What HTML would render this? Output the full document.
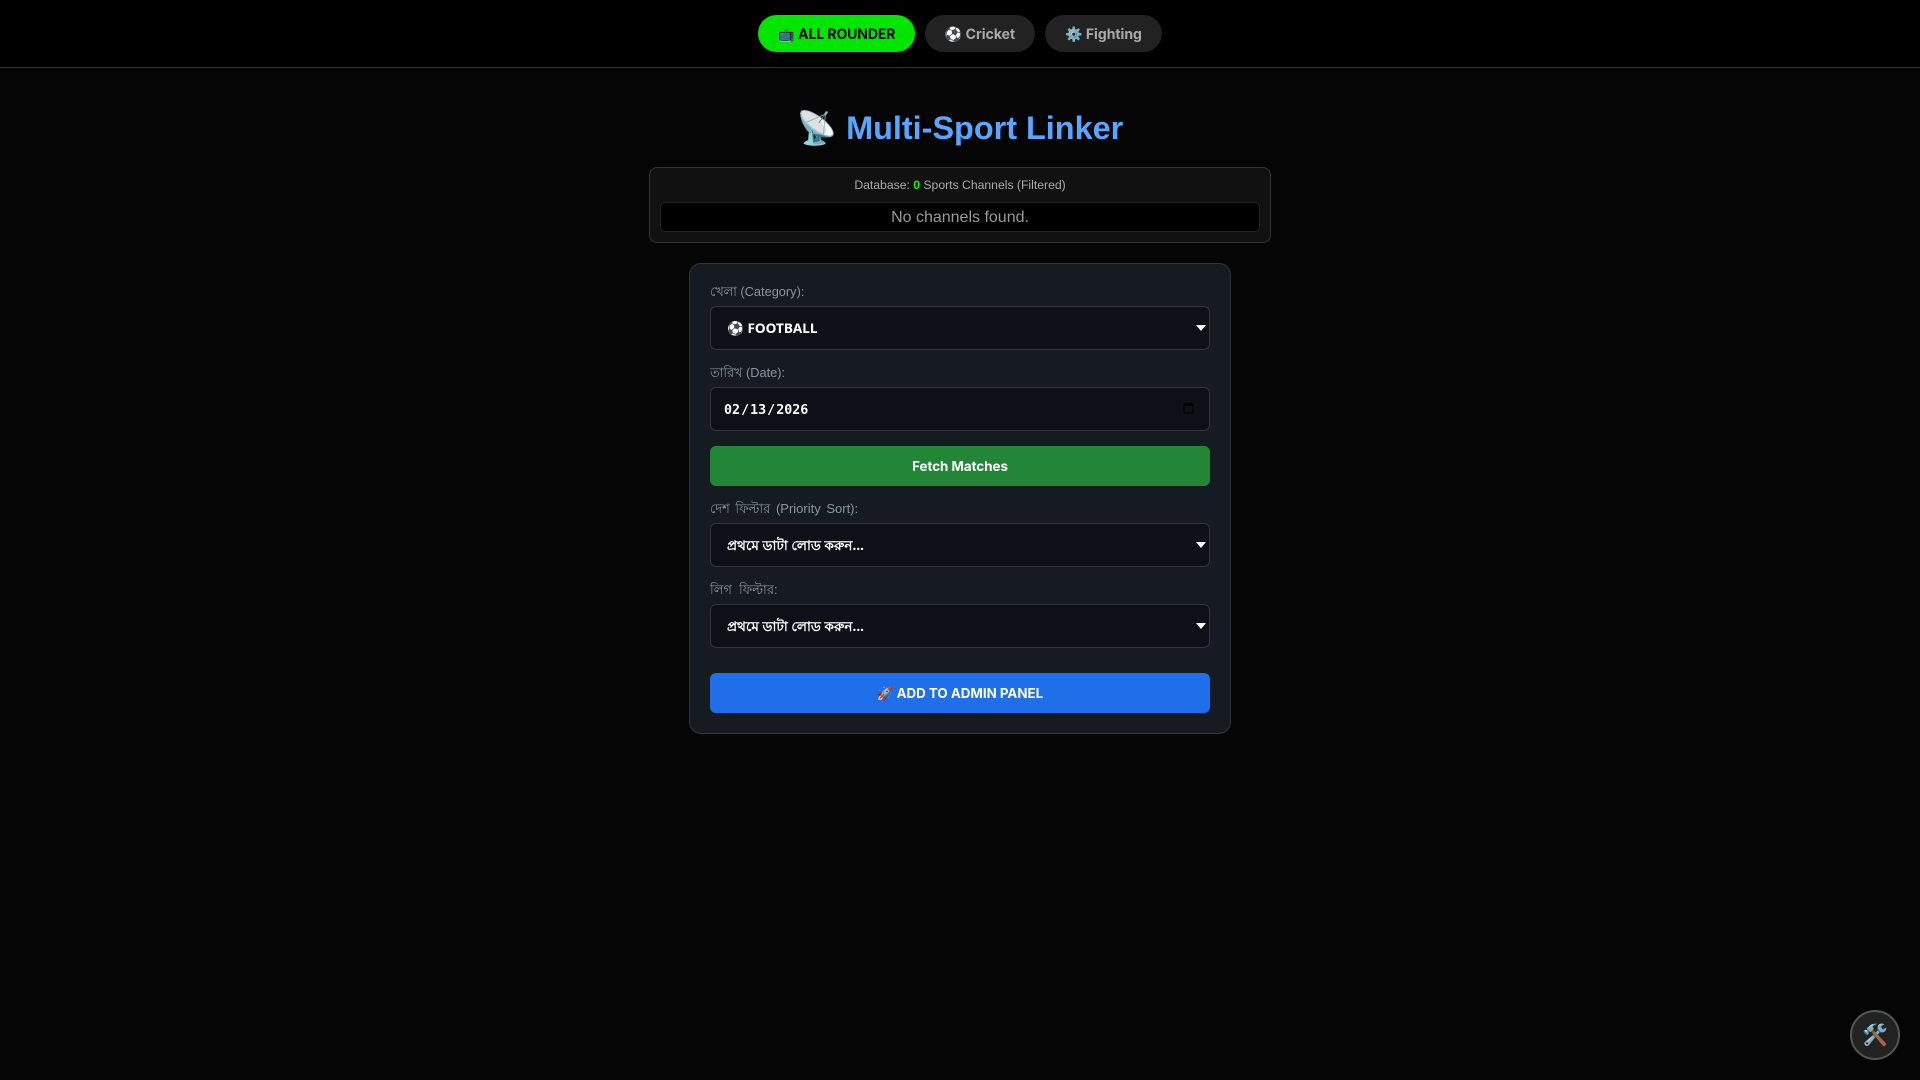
<!DOCTYPE html>
<html lang="en">
<head>
<meta charset="utf-8">
<title>Multi-Sport Linker</title>
<style>
*{box-sizing:border-box}
html,body{margin:0;padding:0;width:1920px;height:1080px;overflow:hidden;background:#050505;font-family:Arial,sans-serif;color-scheme:dark}
.hdr{position:absolute;left:0;top:0;width:1920px;height:68px;background:#000;border-bottom:1px solid #333}
.pill{position:absolute;top:15px;height:37px;border-radius:19px;background:#222;color:#aaa;font:700 14px/39px Inter,"DejaVu Sans","Liberation Sans",sans-serif;text-align:center;white-space:nowrap}
.pill.on{background:#00e600;color:#000;letter-spacing:-.1px}
h1{position:absolute;left:0;top:106px;width:1920px;margin:0;text-align:center;font:700 32.4px/44px "Liberation Sans",sans-serif;color:#58a6ff}
.stats{position:absolute;left:649px;top:167px;width:622px;height:76px;background:#111;border:1px solid #333;border-radius:8px}
.stats .t{position:absolute;left:0;top:10px;width:100%;text-align:center;font-size:12.2px;line-height:15px;color:#aaa}
.stats b{color:#0f0}
.stats .l{position:absolute;left:10px;top:34px;width:600px;height:30px;background:#000;border:1px solid #222;border-radius:5px;text-align:center;font-size:16px;line-height:30px;color:#999}
.card{position:absolute;left:689px;top:263px;width:542px;height:471px;background:#161b22;border:1px solid #30363d;border-radius:12px}
label{position:absolute;left:710px;font-size:13px;line-height:16px;color:#8b949e;white-space:nowrap}
select,input{position:absolute;left:710px;width:500px;height:44px;background:#0d1117;border:1px solid #30363d;border-radius:6px;color:#fff;font:700 13.6px "Noto Sans","DejaVu Sans",sans-serif;padding:0 12px;margin:0;outline:0}
select{-webkit-appearance:none;appearance:none;padding:0 16px 2px}
input{font:700 13.33px "DejaVu Sans Mono",monospace;color-scheme:light;color:#fff;padding-top:3px}
input::-webkit-calendar-picker-indicator{position:relative;top:-2px}
.arr{position:absolute;left:1196px;width:10px;height:6px}
.btn{position:absolute;left:710px;width:500px;height:40px;border-radius:6px;color:#fff;text-align:center;font:700 13.33px/42px Inter,"DejaVu Sans","Liberation Sans",sans-serif}
.tool{position:absolute;left:1850px;top:1010px;width:50px;height:50px;border-radius:50%;background:#222;border:2px solid #555;text-align:center;font-size:20.8px;line-height:47px}
</style>
</head>
<body>
<div class="hdr"></div>
<div class="pill on" style="left:758px;width:157px">📺 ALL ROUNDER</div>
<div class="pill" style="left:925px;width:110px">⚽ Cricket</div>
<div class="pill" style="left:1045px;width:117px">⚙️ Fighting</div>
<h1>📡 Multi-Sport Linker</h1>
<div class="stats">
  <div class="t">Database: <b>0</b> Sports Channels (Filtered)</div>
  <div class="l">No channels found.</div>
</div>
<div class="card"></div>
<label style="top:284px;font-size:12.8px">খেলা (Category):</label>
<select style="top:306px"><option>⚽ FOOTBALL</option></select>
<svg class="arr" style="top:325px" viewBox="0 0 10 6"><path d="M0 0H10L5 6Z" fill="#fff"/></svg>
<label style="top:365px;font-size:12.8px">তারিখ (Date):</label>
<input type="date" value="2026-02-13" style="top:387px">
<div class="btn" style="top:446px;background:#238636">Fetch Matches</div>
<label style="top:501px;word-spacing:2px">দেশ ফিল্টার (Priority Sort):</label>
<select style="top:523px"><option>প্রথমে ডাটা লোড করুন...</option></select>
<svg class="arr" style="top:542px" viewBox="0 0 10 6"><path d="M0 0H10L5 6Z" fill="#fff"/></svg>
<label style="top:582px;word-spacing:3.5px">লিগ ফিল্টার:</label>
<select style="top:604px"><option>প্রথমে ডাটা লোড করুন...</option></select>
<svg class="arr" style="top:623px" viewBox="0 0 10 6"><path d="M0 0H10L5 6Z" fill="#fff"/></svg>
<div class="btn" style="top:673px;background:#1f6feb">🚀 ADD TO ADMIN PANEL</div>
<div class="tool">🛠️</div>
</body>
</html>
